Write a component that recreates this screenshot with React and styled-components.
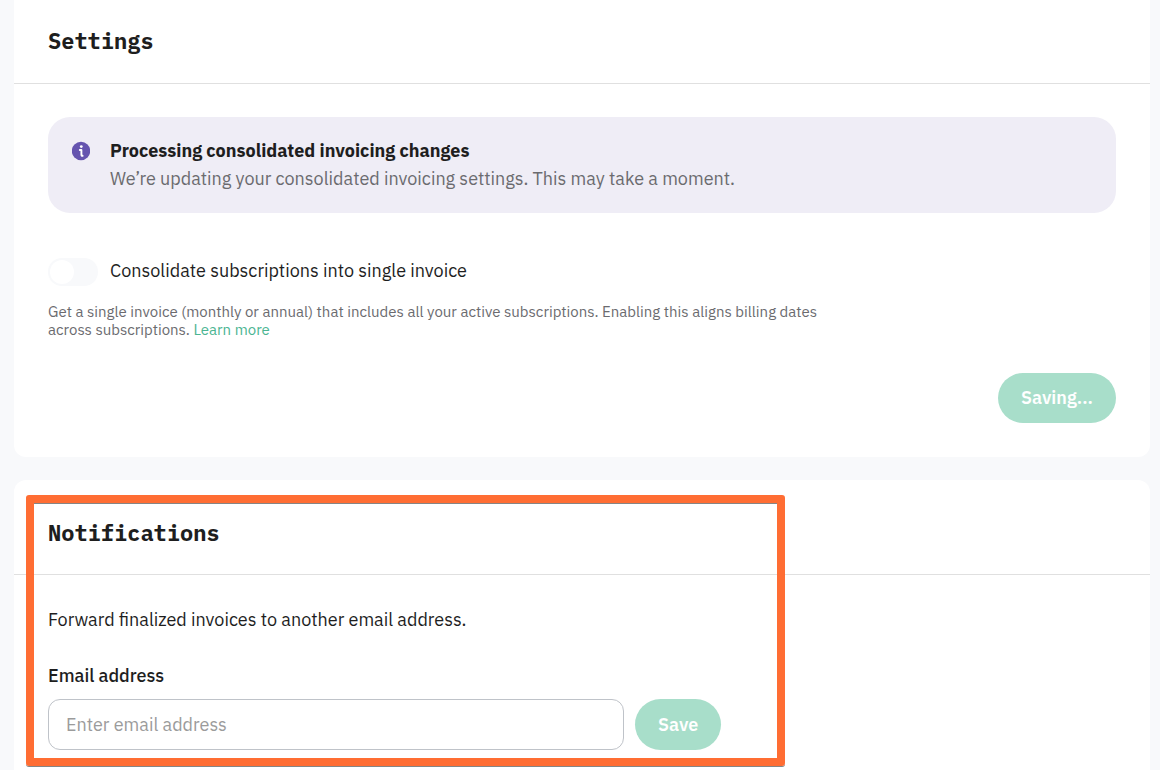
import React, { useState } from "react";
import styled, { createGlobalStyle } from "styled-components";

const GlobalStyle = createGlobalStyle`
  * {
    box-sizing: border-box;
  }

  body {
    margin: 0;
    background: #f8f9fb;
    color: #1e1e1e;
    font-family: "IBM Plex Sans", Roboto, "Liberation Sans", sans-serif;
    font-size: 18px;
    line-height: 28px;
  }
`;

const Page = styled.main`
  display: flex;
  flex-direction: column;
  gap: 23px;
  min-height: 100vh;
  padding: 0 10px 0 14px;
`;

const Card = styled.section`
  position: relative;
  background: #ffffff;
  border-radius: ${(props) => (props.$last ? "12px 12px 0 0" : "0 0 12px 12px")};
  flex-grow: ${(props) => (props.$last ? 1 : 0)};
`;

const CardHeader = styled.header`
  padding: ${(props) => (props.$compact ? "27px 34px 29px" : "39px 34px 28px")};
  border-bottom: 1px solid #e0e0e0;
`;

const CardTitle = styled.h2`
  margin: 0;
  font-family: "IBM Plex Mono", "Liberation Mono", monospace;
  font-size: 22px;
  font-weight: 700;
  line-height: 27px;
`;

const CardBody = styled.div`
  padding: ${(props) => (props.$form ? "31px 34px 20px" : "33px 34px 34px")};
`;

const Alert = styled.div`
  display: flex;
  gap: 20px;
  padding: 20px 24px;
  border-radius: 22px;
  background: #efedf6;
`;

const AlertIcon = styled.svg`
  flex: none;
  width: 18px;
  height: 28px;
`;

const AlertTitle = styled.strong`
  display: block;
  font-weight: 700;
`;

const AlertText = styled.p`
  margin: 0;
  color: #6b6b6f;
`;

const ToggleRow = styled.label`
  display: flex;
  align-items: flex-end;
  gap: 12px;
  margin-top: 45px;
  line-height: 30px;
  height: 28px;
`;

const Toggle = styled.input`
  appearance: none;
  display: flex;
  align-items: center;
  width: 50px;
  height: 28px;
  margin: 0;
  padding: 2px;
  border-radius: 14px;
  background: #f8f9fb;

  &::before {
    content: "";
    width: 24px;
    height: 24px;
    border-radius: 50%;
    background: #ffffff;
  }

  &:checked {
    justify-content: flex-end;
    background: #a8deca;
  }
`;

const HelpText = styled.p`
  max-width: 800px;
  margin: 17px 0 34px;
  color: #6b6b6f;
  font-size: 15px;
  line-height: 18px;
`;

const Link = styled.a`
  color: #4bb592;
  text-decoration: none;
`;

const Actions = styled.div`
  display: flex;
  justify-content: flex-end;
`;

const Button = styled.button`
  height: ${(props) => (props.$tall ? "51px" : "50px")};
  padding: 0 23px;
  border: none;
  border-radius: 26px;
  background: #a8deca;
  color: #ffffff;
  font: inherit;
  font-weight: 600;
`;

const Intro = styled.p`
  margin: 0 0 28px;
`;

const FieldLabel = styled.label`
  display: block;
  margin-bottom: 9px;
  font-weight: 500;
`;

const FieldRow = styled.div`
  display: flex;
  gap: 11px;
`;

const EmailInput = styled.input`
  flex: 0 1 576px;
  min-width: 0;
  height: 51px;
  padding: 0 17px;
  border: 1px solid #bfc3c9;
  border-radius: 12px;
  background: #ffffff;
  color: inherit;
  font: inherit;

  &::placeholder {
    color: #9b9b9b;
  }
`;

const Highlight = styled.div`
  position: absolute;
  top: 15px;
  left: 12px;
  width: 759px;
  max-width: calc(100% - 24px);
  height: 271px;
  border: 8px solid #ff6d33;
  border-radius: 3px;
  box-shadow: 0 1px 0 #858585, inset 0 1px 0 #858585;
  pointer-events: none;
`;

const App = () => {
  const [consolidated, setConsolidated] = useState(false);
  const [email, setEmail] = useState("");

  return (
    <>
      <GlobalStyle />
      <Page>
        <Card>
          <CardHeader $compact>
            <CardTitle>Settings</CardTitle>
          </CardHeader>
          <CardBody>
            <Alert role="status">
              <AlertIcon viewBox="0 0 18 28" aria-hidden="true">
                <circle cx="9" cy="14" r="9.2" fill="#6554af" />
                <circle cx="9.3" cy="9.6" r="1.4" fill="#ffffff" />
                <path
                  d="M7.8 13H9.4V17.4Q9.4 19 10.6 18.8"
                  fill="none"
                  stroke="#ffffff"
                  strokeWidth="1.9"
                  strokeLinecap="round"
                  strokeLinejoin="round"
                />
              </AlertIcon>
              <div>
                <AlertTitle>Processing consolidated invoicing changes</AlertTitle>
                <AlertText>
                  We’re updating your consolidated invoicing settings. This may take a moment.
                </AlertText>
              </div>
            </Alert>

            <ToggleRow>
              <Toggle
                type="checkbox"
                role="switch"
                checked={consolidated}
                onChange={(e) => setConsolidated(e.target.checked)}
              />
              Consolidate subscriptions into single invoice
            </ToggleRow>
            <HelpText>
              Get a single invoice (monthly or annual) that includes all your active subscriptions.
              Enabling this aligns billing dates across subscriptions. <Link href="#">Learn more</Link>
            </HelpText>

            <Actions>
              <Button type="button" disabled>
                Saving...
              </Button>
            </Actions>
          </CardBody>
        </Card>

        <Card $last>
          <CardHeader>
            <CardTitle>Notifications</CardTitle>
          </CardHeader>
          <CardBody $form>
            <Intro>Forward finalized invoices to another email address.</Intro>
            <form onSubmit={(e) => e.preventDefault()}>
              <FieldLabel htmlFor="email">Email address</FieldLabel>
              <FieldRow>
                <EmailInput
                  id="email"
                  type="email"
                  placeholder="Enter email address"
                  value={email}
                  onChange={(e) => setEmail(e.target.value)}
                />
                <Button type="submit" $tall disabled={!email}>
                  Save
                </Button>
              </FieldRow>
            </form>
          </CardBody>
          <Highlight />
        </Card>
      </Page>
    </>
  );
};

export default App;
